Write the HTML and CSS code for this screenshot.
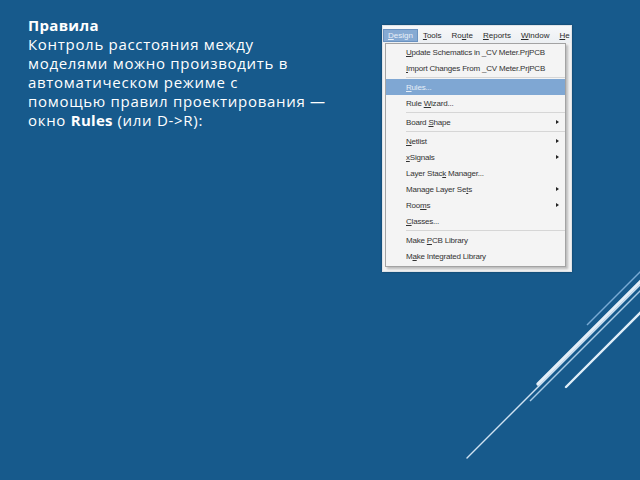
FILE: index.html
```html
<!DOCTYPE html>
<html lang="ru">
<head>
<meta charset="utf-8">
<title>Правила</title>
<link rel="stylesheet" href="styles.css">
</head>
<body>
<div class="slide">
  <div class="text">
    <p><b>Правила</b><br>Контроль расстояния между<br>моделями можно производить в<br>автоматическом режиме с<br>помощью правил проектирования —<br>окно <b>Rules</b> (или D-&gt;R):</p>
  </div>
  <div class="shot">
    <div class="menubar">
      <span class="mi active"><u>D</u>esign</span>
      <span class="mi"><u>T</u>ools</span>
      <span class="mi">Ro<u>u</u>te</span>
      <span class="mi"><u>R</u>eports</span>
      <span class="mi"><u>W</u>indow</span>
      <span class="mi"><u>H</u>e</span>
    </div>
    <div class="dropdown">
      <div class="item"><span><u>U</u>pdate Schematics in _CV Meter.PrjPCB</span></div>
      <div class="item"><span><u>I</u>mport Changes From _CV Meter.PrjPCB</span></div>
      <div class="sep"></div>
      <div class="item hot"><span><u>R</u>ules...</span></div>
      <div class="item"><span>Rule <u>W</u>izard...</span></div>
      <div class="sep"></div>
      <div class="item"><span>Board <u>S</u>hape</span><i class="arrow"></i></div>
      <div class="sep"></div>
      <div class="item"><span><u>N</u>etlist</span><i class="arrow"></i></div>
      <div class="item"><span><u>x</u>Signals</span><i class="arrow"></i></div>
      <div class="item"><span>Layer Stac<u>k</u> Manager...</span></div>
      <div class="item"><span>Manage Layer Se<u>t</u>s</span><i class="arrow"></i></div>
      <div class="item"><span>Roo<u>m</u>s</span><i class="arrow"></i></div>
      <div class="item"><span><u>C</u>lasses...</span></div>
      <div class="sep"></div>
      <div class="item"><span>Make <u>P</u>CB Library</span></div>
      <div class="item"><span>M<u>a</u>ke Integrated Library</span></div>
    </div>
  </div>
</div>
<svg class="deco" width="640" height="480" viewBox="0 0 640 480">
  <line x1="642" y1="270" x2="587" y2="325" stroke="#79aad4" stroke-width="1.5"/>
  <line x1="642" y1="280" x2="538" y2="384" stroke="#e4eff8" stroke-width="3.2" stroke-linecap="round"/>
  <line x1="642" y1="283" x2="467" y2="458" stroke="#cfe2f2" stroke-width="1.4" stroke-linecap="round"/>
  <line x1="642" y1="289" x2="530" y2="401" stroke="#a9cbe6" stroke-width="1.4"/>
  <line x1="642" y1="311" x2="566" y2="387" stroke="#e0eef8" stroke-width="2.4" stroke-linecap="round"/>
</svg>
</body>
</html>
```

FILE: styles.css
```css
html, body {
  margin: 0;
  padding: 0;
  width: 640px;
  height: 480px;
  overflow: hidden;
  background: #175a8c;
}

.slide {
  display: flex;
  align-items: flex-start;
  padding-left: 28px;
  height: 480px;
  box-sizing: border-box;
}

.text {
  width: 354px;
  padding-top: 16px;
  color: #ffffff;
  font-family: "Open Sans", "DejaVu Sans", sans-serif;
  font-size: 15px;
  line-height: 19px;
  letter-spacing: 0.7px;
}

.text p {
  margin: 0;
}

.text b {
  font-weight: 700;
  letter-spacing: 0.3px;
}

.shot {
  margin-top: 25px;
  width: 190px;
  height: 247px;
  box-sizing: border-box;
  border: 1px solid #dfe3e7;
  background: #f2f2f2;
  box-shadow: 0 0 2px rgba(0, 0, 0, 0.35);
  overflow: hidden;
  font-family: "Liberation Sans", Arial, sans-serif;
  font-size: 8px;
  color: #2a2a2a;
}

.menubar {
  display: flex;
  white-space: nowrap;
  padding-top: 3px;
  height: 17px;
  box-sizing: border-box;
  background: linear-gradient(#f6f8fa, #eceff2);
}

.mi {
  padding: 0 5px;
  height: 13px;
  line-height: 13px;
  box-sizing: border-box;
}

.mi.active {
  background: #86aad3;
  border: 1px solid #6a92c0;
  line-height: 11px;
  padding: 0 4px;
  color: #e9f0f8;
}

.dropdown {
  margin-left: 2px;
  width: 181px;
  box-sizing: border-box;
  border: 1px solid #a3a3a3;
  background: #f4f4f4;
  padding-bottom: 2px;
  box-shadow: 2px 2px 2px rgba(0, 0, 0, 0.22);
}

.item {
  display: flex;
  align-items: center;
  justify-content: space-between;
  height: 16px;
  padding: 0 6px 0 20px;
  letter-spacing: -0.2px;
  white-space: nowrap;
  color: #333333;
}

.item.hot {
  background: #7fa7d3;
  color: #e6eef7;
}

.arrow {
  width: 0;
  height: 0;
  border-top: 2.5px solid transparent;
  border-bottom: 2.5px solid transparent;
  border-left: 3px solid #222;
}

.sep {
  margin: 1px 0 1px 20px;
  height: 1px;
  background: #d6d6d6;
}

.deco {
  position: absolute;
  left: 0;
  top: 0;
  pointer-events: none;
}
```
